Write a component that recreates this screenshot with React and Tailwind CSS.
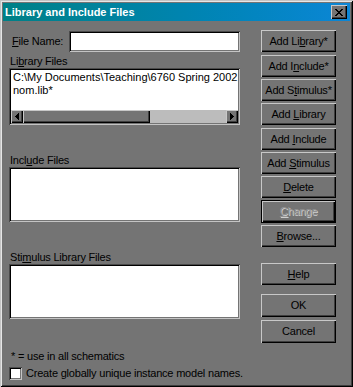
import React from "react";

const raised =
  "shadow-[inset_1px_1px_0_#c8c8c8,inset_-1px_-1px_0_#000,inset_-2px_-2px_0_#3e3e3e]";
const sunken =
  "shadow-[inset_1px_1px_0_#4a4a4a,inset_-1px_-1px_0_#c4c4c4,inset_2px_2px_0_#000,inset_-2px_-2px_0_#747474]";

function Btn({ children, className = "", disabled = false, def = false }) {
  if (def) {
    return (
      <div className={`w-[75px] h-[23px] border border-black bg-[#747474] ${className}`}>
        <div
          className={`w-full h-full flex items-center justify-center ${raised} ${
            disabled ? "text-[#939393] [text-shadow:1px_1px_0_#cfcfcf]" : "text-black"
          }`}
        >
          <span>{children}</span>
        </div>
      </div>
    );
  }
  return (
    <div
      className={`w-[75px] h-[22px] flex items-center justify-center bg-[#747474] text-black ${raised} ${className}`}
    >
      <span>{children}</span>
    </div>
  );
}

function Arrow({ dir }) {
  return (
    <div className={`w-[12px] h-[13px] shrink-0 bg-[#747474] flex items-center justify-center ${raised}`}>
      <svg width="4" height="7" viewBox="0 0 4 7" shapeRendering="crispEdges">
        {dir === "left" ? (
          <path d="M0 3h1v1H0zM1 2h1v3H1zM2 1h1v5H2zM3 0h1v7H3z" fill="#000" />
        ) : (
          <path d="M0 0h1v7H0zM1 1h1v5H1zM2 2h1v3H2zM3 3h1v1H3z" fill="#000" />
        )}
      </svg>
    </div>
  );
}

export default function App() {
  return (
    <div
      className="w-[353px] h-[387px] bg-[#747474] p-[3px] flex flex-col text-[11px] tracking-[-0.2px] text-black shadow-[inset_1px_1px_0_#c4c4c4,inset_-1px_-1px_0_#000,inset_2px_2px_0_#e6e6e6,inset_-2px_-2px_0_#3e3e3e] overflow-hidden"
      style={{ fontFamily: '"Liberation Sans", Arial, sans-serif' }}
    >
      {/* Title bar */}
      <div className="h-[18px] bg-linear-to-r from-[#008086] to-[#0c86d6] flex items-center justify-between pl-[2px] pr-[3px]">
        <span className="text-white font-bold tracking-normal leading-none">Library and Include Files</span>
        <div className={`w-[16px] h-[14px] bg-[#747474] flex items-center justify-center ${raised}`}>
          <svg width="8" height="7" viewBox="0 0 8 7" shapeRendering="crispEdges">
            <path
              d="M0 0h2v1H0zM6 0h2v1H6zM1 1h2v1H1zM5 1h2v1H5zM2 2h4v1H2zM3 3h2v1H3zM2 4h4v1H2zM1 5h2v1H1zM5 5h2v1H5zM0 6h2v1H0zM6 6h2v1H6z"
              fill="#000"
            />
          </svg>
        </div>
      </div>

      {/* Body */}
      <div className="flex flex-1">
        {/* Left column */}
        <div className="ml-[6px] w-[231px] shrink-0 flex flex-col">
          <div className="mt-[10px] h-[21px] flex items-center justify-between">
            <span className="pl-[3px]">
              <u>F</u>ile Name:
            </span>
            <div className={`w-[171px] h-[21px] bg-white ${sunken}`} />
          </div>

          <div className="mt-[3px] h-[13px] leading-[13px] pl-[1px]">
            Li<u>b</u>rary Files
          </div>
          <div className={`h-[57px] bg-white p-[2px] flex flex-col ${sunken}`}>
            <div className="flex-1 pl-[2px] pt-[1px] leading-[13px] tracking-normal overflow-hidden whitespace-nowrap">
              <div>C:\My Documents\Teaching\6760 Spring 2002</div>
              <div>nom.lib*</div>
            </div>
            <div className="h-[13px] flex bg-[#bcbcbc]">
              <Arrow dir="left" />
              <div className={`w-[127px] h-[13px] shrink-0 bg-[#747474] ${raised}`} />
              <div className="flex-1" />
              <Arrow dir="right" />
            </div>
          </div>

          <div className="mt-[29px] h-[13px] leading-[13px] pl-[1px]">
            Incl<u>u</u>de Files
          </div>
          <div className={`h-[55px] bg-white ${sunken}`} />

          <div className="mt-[29px] h-[13px] leading-[13px] pl-[1px]">
            Sti<u>m</u>ulus Library Files
          </div>
          <div className={`h-[55px] bg-white ${sunken}`} />

          <div className="mt-[31px] h-[13px] leading-[13px] pl-[2px]">* = use in all schematics</div>
          <div className="mt-[4px] h-[13px] flex items-center">
            <div className={`w-[13px] h-[13px] shrink-0 bg-white ${sunken}`} />
            <span className="ml-[4px] leading-[13px] whitespace-nowrap">
              Create globally unique instance model names.
            </span>
          </div>
        </div>

        {/* Right column */}
        <div className="ml-[21px] w-[75px] shrink-0 flex flex-col">
          <Btn className="mt-[9px]">
            Add Li<u>b</u>rary*
          </Btn>
          <Btn className="mt-[3px]">
            Add I<u>n</u>clude*
          </Btn>
          <Btn className="mt-[2px]">
            Add S<u>t</u>imulus*
          </Btn>
          <Btn className="mt-[2px]">
            Add <u>L</u>ibrary
          </Btn>
          <Btn className="mt-[3px]">
            Add <u>I</u>nclude
          </Btn>
          <Btn className="mt-[2px]">
            Add <u>S</u>timulus
          </Btn>
          <Btn className="mt-[2px]">
            <u>D</u>elete
          </Btn>
          <Btn className="mt-[2px]" def disabled>
            <u>C</u>hange
          </Btn>
          <Btn className="mt-[2px]">
            <u>B</u>rowse...
          </Btn>
          <Btn className="mt-[16px]">
            <u>H</u>elp
          </Btn>
          <Btn className="mt-[9px] !h-[23px]">OK</Btn>
          <Btn className="mt-[3px] !h-[23px]">Cancel</Btn>
        </div>
      </div>
    </div>
  );
}
